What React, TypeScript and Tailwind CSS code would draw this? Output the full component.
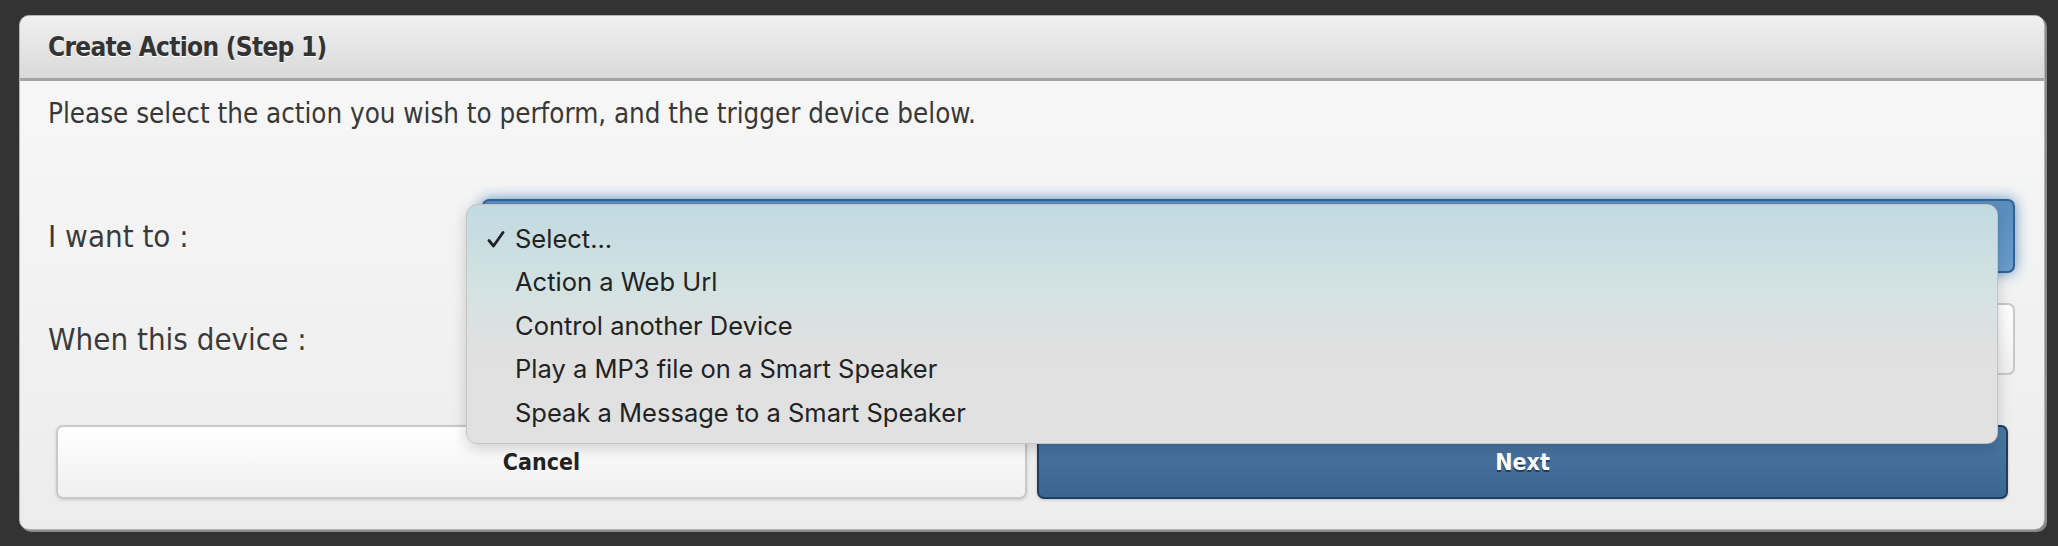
import React from "react";

const cond = { fontFamily: '"DejaVu Sans Condensed", "DejaVu Sans", sans-serif', fontStretch: "condensed" } as React.CSSProperties;

const items = [
  "Select...",
  "Action a Web Url",
  "Control another Device",
  "Play a MP3 file on a Smart Speaker",
  "Speak a Message to a Smart Speaker",
];

export default function App() {
  return (
    <div className="w-[2058px] h-[546px] bg-[#333333] pt-[15px] pl-[19px] overflow-hidden">
      <div
        className="w-[2026px] h-[515px] rounded-[10px] border border-[#b4b4b4] shadow-[2px_2px_0_#8a8a8a] bg-gradient-to-b from-[#f8f8f8] to-[#ececec] flex flex-col overflow-visible"
        style={cond}
      >
        <div className="h-[65px] shrink-0 rounded-t-[10px] bg-gradient-to-b from-[#f0f0f0] to-[#d9d9d9] border-b-[3px] border-[#a3a3a3] flex items-center pl-[28px]">
          <span className="text-[26px] tracking-[-0.7px] font-bold text-[#333] [text-shadow:0_1px_0_#fff]">Create Action (Step 1)</span>
        </div>
        <div className="flex flex-col px-[35px] pt-[13px]">
          <p className="text-[27.5px] leading-[38px] text-[#383838] -ml-[7px]">
            Please select the action you wish to perform, and the trigger device below.
          </p>
          <div className="flex items-center mt-[67px] -ml-[7px] -mr-[6px]">
            <div className="w-[434px] text-[31px] text-[#3a3a3a] [text-shadow:0_1px_0_#fff]">I want to :</div>
            <div className="relative flex-1">
              <div className="h-[74px] rounded-[7px] border-2 border-[#2e6296] bg-gradient-to-b from-[#5a8dbd] to-[#6a9ccb] shadow-[0_0_14px_#5b8fc4] flex items-center justify-end pr-[15px]">
                <div className="w-[22px] h-[22px] rounded-full bg-[#3b3b3b]" />
              </div>
              <div
                className="absolute left-[-16px] top-[5px] w-[1532px] h-[240px] rounded-[11px] border border-[#c4c4c4] shadow-[0_4px_14px_rgba(0,0,0,0.18)] bg-[linear-gradient(180deg,#c1dae1_0%,#d3e2e2_35%,#e0e0e0_60%,#e1e1e1_100%)] pt-[12px] z-10"
                style={{ fontFamily: 'Inter, "Noto Sans", sans-serif' }}
              >
                {items.map((t, i) => (
                  <div key={t} className="h-[43.6px] flex items-center text-[25.5px] text-[#222] pl-[48px] relative">
                    {i === 0 && (
                      <svg className="absolute left-[20px] top-[14px]" width="18" height="17" viewBox="0 0 18 17">
                        <path d="M2 9.5 L6.5 15 L16 1.5" fill="none" stroke="#222" strokeWidth="2.8" strokeLinecap="round" strokeLinejoin="round" />
                      </svg>
                    )}
                    {t}
                  </div>
                ))}
              </div>
            </div>
          </div>
          <div className="flex items-center mt-[30px] -ml-[7px] -mr-[6px]">
            <div className="w-[434px] text-[31px] text-[#3a3a3a] [text-shadow:0_1px_0_#fff]">When this device :</div>
            <div className="flex-1 h-[72px] rounded-[7px] border-2 border-[#c8c8c8] bg-gradient-to-b from-[#ffffff] to-[#f0f0f0] flex items-center justify-end pr-[15px]">
              <div className="w-[22px] h-[22px] rounded-full bg-[#3b3b3b]" />
            </div>
          </div>
          <div className="flex gap-[10px] mt-[50px] px-[1px]">
            <button className="flex-1 h-[74px] rounded-[7px] border-2 border-[#c9c9c9] bg-gradient-to-b from-[#ffffff] to-[#efefef] shadow-[0_1px_3px_rgba(0,0,0,0.15)] text-[23px] font-bold text-[#222] [text-shadow:0_1px_0_#fff]">
              Cancel
            </button>
            <button className="flex-1 h-[74px] rounded-[7px] border-2 border-[#1c3e62] bg-gradient-to-b from-[#4c79a4] to-[#3b6592] shadow-[0_1px_3px_rgba(0,0,0,0.2)] text-[23px] font-bold text-white [text-shadow:0_2px_0_#1f3d5e]">
              Next
            </button>
          </div>
        </div>
      </div>
    </div>
  );
}
